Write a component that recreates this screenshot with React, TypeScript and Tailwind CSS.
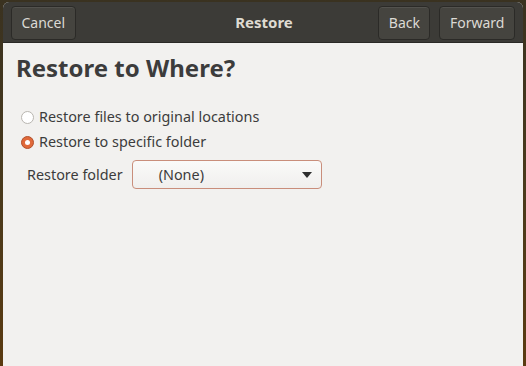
import React from 'react';

function HeaderButton({ label }: { label: string }) {
  return (
    <button
      type="button"
      className="h-[34px] rounded-[4px] border border-[#2b2a27] bg-[#45443f] px-[9.5px] text-[14px] text-[#dcdad5] shadow-[inset_0_1px_0_rgba(255,255,255,0.08)]"
    >
      {label}
    </button>
  );
}

function Radio({ checked, label }: { checked?: boolean; label: string }) {
  return (
    <label className="flex h-[20px] items-center gap-[5px]">
      {checked ? (
        <span className="flex h-[13px] w-[13px] items-center justify-center rounded-full border border-[#b2512c] bg-[#e0693a]">
          <span className="h-[5px] w-[5px] rounded-full bg-white" />
        </span>
      ) : (
        <span className="h-[13px] w-[13px] rounded-full border border-[#b9b6b0] bg-white" />
      )}
      <span>{label}</span>
    </label>
  );
}

export default function App() {
  return (
    <div
      className="h-[366px] w-[526px] overflow-hidden bg-gradient-to-b from-[#3a3220] via-[#4a3a1c] to-[#5a3a10] px-[3px] pt-[2px]"
      style={{ fontFamily: '"Noto Sans", "Open Sans", sans-serif' }}
    >
      <div className="flex h-[372px] flex-col overflow-hidden rounded-t-[6px] bg-[#f2f1ef]">
        <header className="flex h-[41px] items-center justify-between border-b border-[#2a2926] bg-[#3c3b37] px-[8px] pt-[1px]">
          <HeaderButton label="Cancel" />
          <span className="ml-[74px] text-[15px] font-bold text-[#dfdbd2]">Restore</span>
          <div className="flex gap-[9px]">
            <HeaderButton label="Back" />
            <HeaderButton label="Forward" />
          </div>
        </header>

        <main className="px-[13px] pt-[10px] text-[14.4px] text-[#3c3c3c]">
          <h1 className="text-[24px] font-bold leading-[30px] text-[#3c3c3c]">Restore to Where?</h1>

          <div className="mt-[24px] flex flex-col gap-[5px] pl-[5px]">
            <Radio label="Restore files to original locations" />
            <Radio checked label="Restore to specific folder" />
          </div>

          <div className="mt-[8px] flex items-center gap-[9px] pl-[11px]">
            <span>Restore folder</span>
            <div className="flex h-[29px] w-[190px] items-center justify-between rounded-[4px] border border-[#c98e7b] bg-gradient-to-b from-[#fafaf9] to-[#f0efed] pl-[26px] pr-[9px]">
              <span>(None)</span>
              <svg width="10" height="6" viewBox="0 0 10 6">
                <path d="M0 0 H10 L5 6 Z" fill="#2e2e2e" />
              </svg>
            </div>
          </div>
        </main>
      </div>
    </div>
  );
}
